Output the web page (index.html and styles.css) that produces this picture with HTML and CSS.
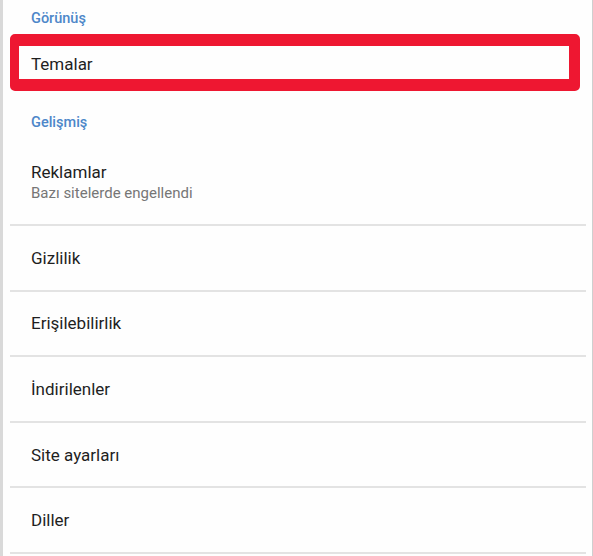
FILE: index.html
```html
<!DOCTYPE html>
<html lang="tr">
<head>
<meta charset="utf-8">
<link rel="stylesheet" href="styles.css">
</head>
<body>
<div class="page">
  <div class="section-head first">Görünüş</div>
  <div class="highlight">
    <span class="title">Temalar</span>
  </div>
  <div class="section-head second">Gelişmiş</div>
  <div class="list">
    <div class="row tall">
      <span class="title">Reklamlar</span>
      <span class="sub">Bazı sitelerde engellendi</span>
    </div>
    <div class="row"><span class="title">Gizlilik</span></div>
    <div class="row"><span class="title">Erişilebilirlik</span></div>
    <div class="row"><span class="title">İndirilenler</span></div>
    <div class="row"><span class="title">Site ayarları</span></div>
    <div class="row"><span class="title">Diller</span></div>
  </div>
</div>
</body>
</html>
```
FILE: styles.css
```css
html, body {
  margin: 0;
  padding: 0;
  background: #ffffff;
}
body {
  font-family: Roboto, "Noto Sans", sans-serif;
}
.page {
  width: 589px;
  height: 556px;
  border-left: 3px solid #d9d9d9;
  border-right: 1px solid #cfcfcf;
  background: #fefefe;
  overflow: hidden;
}
.section-head {
  color: #4d87c9;
  font-size: 14.5px;
  font-weight: 500;
  line-height: 16px;
  padding-left: 28px;
}
.section-head.first {
  padding-top: 11px;
  margin-bottom: 7px;
}
.section-head.second {
  margin-top: 24px;
  margin-bottom: 9px;
}
.highlight {
  margin-left: 7px;
  width: 538px;
  height: 31px;
  border-style: solid;
  border-color: #ee1731;
  border-width: 12px 11px 12px 9px;
  border-radius: 5px;
  display: flex;
  align-items: center;
  padding-left: 12px;
  padding-top: 2px;
  box-sizing: content-box;
}
.title {
  font-size: 17px;
  color: #1f1f1f;
  line-height: 22px;
}
.list {
  margin-left: 7px;
  width: 576px;
}
.row {
  height: 63.6px;
  border-bottom: 2px solid #e3e3e3;
  padding-left: 21px;
  display: flex;
  flex-direction: column;
  justify-content: center;
}
.row.tall {
  height: 84px;
}
.sub {
  font-size: 15px;
  color: #767676;
  line-height: 20px;
}
```
